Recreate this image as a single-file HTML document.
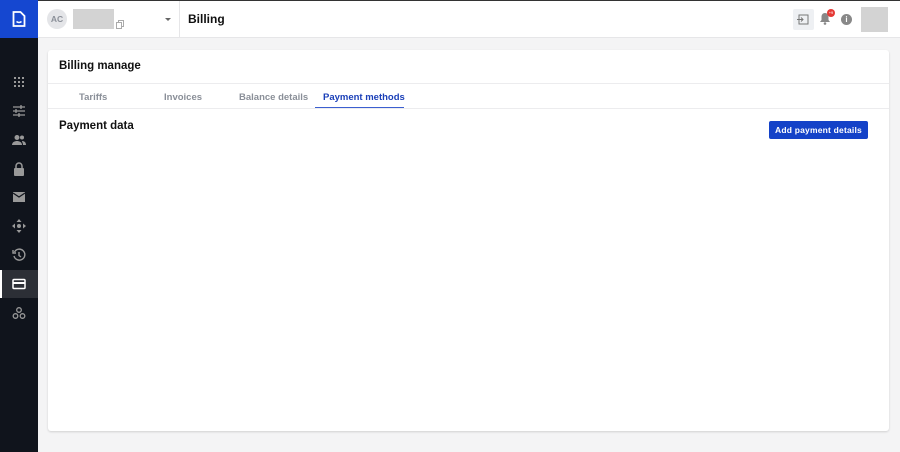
<!DOCTYPE html>
<html><head><meta charset="utf-8"><style>
*{box-sizing:border-box;margin:0;padding:0}
body{width:900px;height:452px;overflow:hidden;background:#f4f4f5;font-family:"Liberation Sans",sans-serif;position:relative}
.sb{position:absolute;left:0;top:0;width:38px;height:452px;background:#10141c}
.logo{position:absolute;left:0;top:0;width:38px;height:38px;background:#1547d0}
.ic{position:absolute;left:12px;width:14px;height:14px}
.act{position:absolute;left:0;top:270px;width:38px;height:28px;background:#2c2f36;border-left:2px solid #fff}
.top{position:absolute;left:38px;top:0;right:0;height:38px;background:#fff;border-bottom:1px solid #e6e6e8;border-top:1px solid #333}
.card{position:absolute;left:48px;top:50px;width:841px;height:381px;background:#fff;border-radius:3px;box-shadow:0 1px 2px rgba(0,0,0,.15)}
.tab{position:absolute;top:42px;font-size:9.5px;color:#8a8f98;font-weight:bold}
</style></head><body>
<div class="sb">
<div class="logo"><svg width="38" height="38"><path d="M13.5 12h7l4 4v10h-11z" fill="none" stroke="#fff" stroke-width="1.8"/><path d="M16.5 21.5q2.5 2 5 0" stroke="#fff" stroke-width="1.5" fill="none"/></svg></div>
<svg class="ic" style="top:75px" viewBox="0 0 14 14" fill="#999"><g><rect x="2" y="2" width="2" height="2"/><rect x="6" y="2" width="2" height="2"/><rect x="10" y="2" width="2" height="2"/><rect x="2" y="6" width="2" height="2"/><rect x="6" y="6" width="2" height="2"/><rect x="10" y="6" width="2" height="2"/><rect x="2" y="10" width="2" height="2"/><rect x="6" y="10" width="2" height="2"/><rect x="10" y="10" width="2" height="2"/></g></svg>
<svg class="ic" style="top:104px" viewBox="0 0 14 14" stroke="#999" stroke-width="1.3"><path d="M1 3h12M1 7h12M1 11h12"/><path d="M9 1v4M4 5v4M7 9v4"/></svg>
<svg class="ic" style="top:133px" viewBox="0 0 14 14" fill="#999"><circle cx="5" cy="4.5" r="2.5"/><circle cx="10" cy="4.5" r="2"/><path d="M0 12c0-3 3-4 5-4s5 1 5 4z"/><path d="M10 8c2 0 4 1 4 4h-3c0-2-1-3-1-4z"/></svg>
<svg class="ic" style="top:162px" viewBox="0 0 14 14" fill="#999"><rect x="2" y="6" width="10" height="8" rx="1"/><path d="M4 6V4a3 3 0 016 0v2" fill="none" stroke="#999" stroke-width="1.5"/></svg>
<svg class="ic" style="top:190px" viewBox="0 0 14 14"><rect x="1" y="2" width="12" height="10" fill="#999"/><path d="M1 3l6 4 6-4" stroke="#10141c" stroke-width="1.2" fill="none"/></svg>
<svg class="ic" style="top:219px" viewBox="0 0 14 14" fill="#999"><path d="M7 0l2.5 3h-5zM7 14l2.5-3h-5zM0 7l3-2.5v5zM14 7l-3-2.5v5z"/><circle cx="7" cy="7" r="2"/></svg>
<svg class="ic" style="top:248px" viewBox="0 0 14 14" fill="none" stroke="#999" stroke-width="1.4"><path d="M2.5 4A5.5 5.5 0 1 1 2 8"/><path d="M1 2v3h3" /><path d="M7 4v3.5l2 1.5"/></svg>
<div class="act"></div>
<svg class="ic" style="top:277px" viewBox="0 0 14 14"><rect x="1" y="2.5" width="12" height="9" rx="1" fill="none" stroke="#fff" stroke-width="1.5"/><rect x="1" y="5" width="12" height="2" fill="#fff"/></svg>
<svg class="ic" style="top:306px" viewBox="0 0 14 14" fill="none" stroke="#999" stroke-width="1.3"><circle cx="7" cy="4" r="2.3"/><circle cx="3.5" cy="10" r="2.3"/><circle cx="10.5" cy="10" r="2.3"/></svg>
</div>
<div class="top">
<div style="position:absolute;left:9px;top:8px;width:20px;height:20px;border-radius:50%;background:#e4e5e8;color:#8a8f98;font-size:8.5px;font-weight:bold;text-align:center;line-height:20px">AC</div>
<div style="position:absolute;left:35px;top:8px;width:41px;height:20px;background:#d3d3d3"></div>
<svg style="position:absolute;left:78px;top:19px" width="8" height="9"><rect x="2.5" y="0.5" width="5" height="6" fill="none" stroke="#aaa"/><rect x="0.5" y="2.5" width="5" height="6" fill="#fff" stroke="#aaa"/></svg>
<div style="position:absolute;left:127px;top:17px;border:3px solid transparent;border-top:3px solid #666"></div>
<div style="position:absolute;left:141px;top:0;width:1px;height:37px;background:#e6e6e8"></div>
<div style="position:absolute;left:150px;top:11px;font-size:12px;font-weight:bold;color:#111">Billing</div>
<div style="position:absolute;left:755px;top:8px;width:21px;height:21px;background:#eef0f3;border-radius:2px"><svg width="21" height="21"><rect x="6" y="6" width="9" height="9" fill="none" stroke="#777"/><path d="M4 10.5h6M8 8.5l2 2-2 2" stroke="#777" fill="none"/></svg></div>
<svg style="position:absolute;left:781px;top:11px" width="12" height="13"><path d="M6 1c-2.5 0-3.5 2-3.5 4v3L1 10h10L9.5 8V5C9.5 3 8.5 1 6 1z" fill="#888"/><circle cx="6" cy="11.5" r="1.3" fill="#888"/></svg>
<div style="position:absolute;left:789px;top:8px;width:8px;height:8px;border-radius:50%;background:#e53935;color:#fff;font-size:4px;text-align:center;line-height:8px">+9</div>
<div style="position:absolute;left:803px;top:13px;width:11px;height:11px;border-radius:50%;background:#888;color:#fff;font-size:8px;font-weight:bold;text-align:center;line-height:11px">i</div>
<div style="position:absolute;left:823px;top:6px;width:27px;height:25px;background:#d3d3d3"></div>
</div>
<div class="card">
<div style="position:absolute;left:11px;top:10px;font-size:11.5px;font-weight:bold;color:#111">Billing manage</div>
<div style="position:absolute;left:0;right:0;top:33px;height:1px;background:#ececee"></div>
<div class="tab" style="left:31px">Tariffs</div>
<div class="tab" style="left:116px">Invoices</div>
<div class="tab" style="left:191px">Balance details</div>
<div class="tab" style="left:275px;color:#1a3fb8">Payment methods</div>
<div style="position:absolute;left:267px;width:89px;top:57px;height:2px;background:#3c5fd0"></div>
<div style="position:absolute;left:0;right:0;top:58px;height:1px;background:#ececee"></div>
<div style="position:absolute;left:11px;top:70px;font-size:11.5px;font-weight:bold;color:#111">Payment data</div>
<div style="position:absolute;left:721px;top:71px;width:99px;height:18px;background:#1442c8;border-radius:2px;color:#fff;font-size:8.5px;font-weight:bold;text-align:center;line-height:18px;letter-spacing:.2px">Add payment details</div>
</div>
</body></html>
